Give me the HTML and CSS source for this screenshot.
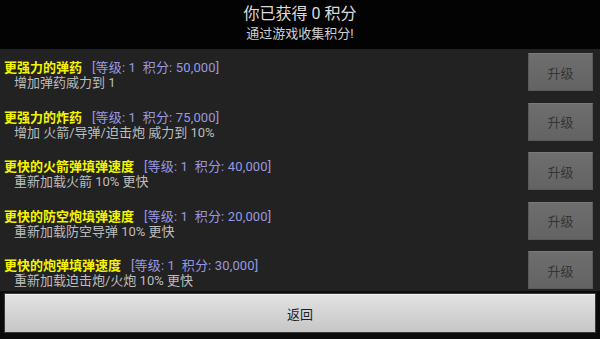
FILE: index.html
```html
<!DOCTYPE html>
<html>
<head>
<meta charset="utf-8">
<link rel="stylesheet" href="styles.css">
</head>
<body>
<div class="screen">
  <header class="header">
    <div class="score">你已获得 0 积分</div>
    <div class="hint">通过游戏收集积分!</div>
  </header>
  <div class="list">
    <div class="row">
      <div class="info">
        <div class="title"><span class="name">更强力的弹药</span><span class="meta">[等级: 1&nbsp;&nbsp;积分: 50,000]</span></div>
        <div class="desc">增加弹药威力到 1</div>
      </div>
      <button class="upgrade">升级</button>
    </div>
    <div class="row">
      <div class="info">
        <div class="title"><span class="name">更强力的炸药</span><span class="meta">[等级: 1&nbsp;&nbsp;积分: 75,000]</span></div>
        <div class="desc">增加 火箭/导弹/迫击炮 威力到 10%</div>
      </div>
      <button class="upgrade">升级</button>
    </div>
    <div class="row">
      <div class="info">
        <div class="title"><span class="name">更快的火箭弹填弹速度</span><span class="meta">[等级: 1&nbsp;&nbsp;积分: 40,000]</span></div>
        <div class="desc">重新加载火箭 10% 更快</div>
      </div>
      <button class="upgrade">升级</button>
    </div>
    <div class="row">
      <div class="info">
        <div class="title"><span class="name">更快的防空炮填弹速度</span><span class="meta">[等级: 1&nbsp;&nbsp;积分: 20,000]</span></div>
        <div class="desc">重新加载防空导弹 10% 更快</div>
      </div>
      <button class="upgrade">升级</button>
    </div>
    <div class="row">
      <div class="info">
        <div class="title"><span class="name">更快的炮弹填弹速度</span><span class="meta">[等级: 1&nbsp;&nbsp;积分: 30,000]</span></div>
        <div class="desc">重新加载迫击炮/火炮 10% 更快</div>
      </div>
      <button class="upgrade">升级</button>
    </div>
  </div>
  <footer class="footer">
    <button class="back">返回</button>
  </footer>
</div>
</body>
</html>
```
FILE: styles.css
```css
* { box-sizing: border-box; }
html, body {
  margin: 0;
  padding: 0;
  background: #0b0b0b;
  font-family: "Roboto", "Noto Sans CJK SC", sans-serif;
}
.screen {
  width: 600px;
  height: 339px;
  display: flex;
  flex-direction: column;
  overflow: hidden;
}
.header {
  height: 49px;
  background: #030303;
  display: flex;
  flex-direction: column;
  align-items: center;
  padding-top: 3px;
}
.score {
  color: #dcdcdc;
  font-size: 16px;
  line-height: 22px;
}
.hint {
  color: #d0d0d0;
  font-size: 13px;
  line-height: 17px;
}
.list {
  height: 242px;
  background: #222222;
  overflow: hidden;
  flex: none;
}
.row {
  height: 49.5px;
  display: flex;
  justify-content: space-between;
  align-items: flex-start;
}
.info {
  padding-top: 11px;
  padding-left: 4px;
  font-size: 13px;
  line-height: 15px;
}
.name {
  color: #f4f400;
  font-weight: bold;
  margin-right: 10px;
}
.meta {
  color: #9898e0;
  letter-spacing: 0.15px;
}
.desc {
  color: #bdbdbd;
  padding-left: 10px;
}
.upgrade {
  margin-top: 4px;
  margin-right: 7px;
  width: 65px;
  height: 38px;
  background: linear-gradient(#6e6e6e, #636363);
  border: 1px solid #5a5a5a;
  border-top-color: #7a7a7a;
  color: #353535;
  font-family: "Roboto", "Noto Sans CJK SC", sans-serif;
  font-size: 13px;
  padding: 0;
}
.footer {
  flex: 1;
  background: #0b0b0b;
  padding: 2px 4px 0 4px;
}
.back {
  width: 100%;
  height: 40px;
  background: linear-gradient(#e2e2e2, #c6c6c6);
  border: 1px solid #3a3a3a;
  box-shadow: inset 0 1px 0 #f0f0f0;
  color: #1e1e1e;
  font-family: "Roboto", "Noto Sans CJK SC", sans-serif;
  font-size: 13px;
  padding: 0;
}
```
